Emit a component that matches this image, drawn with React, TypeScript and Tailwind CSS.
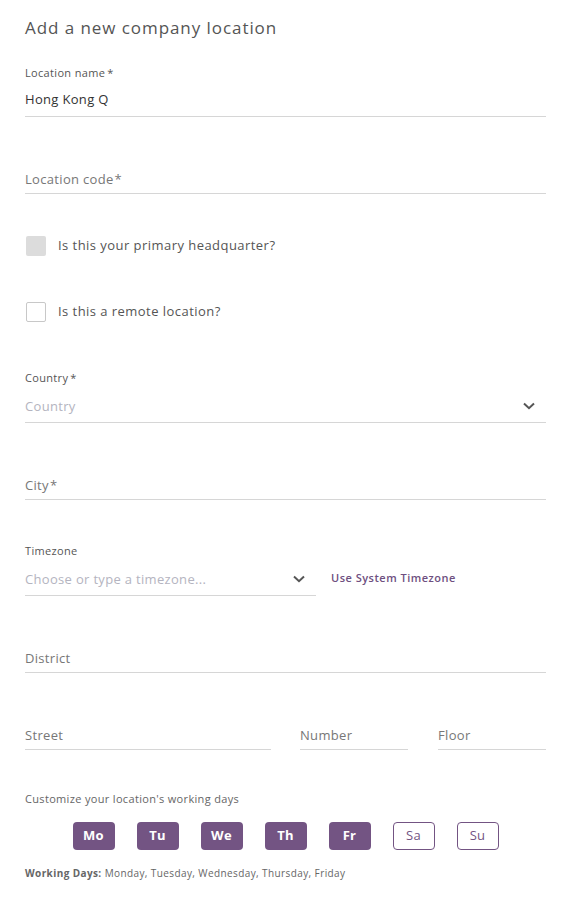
import React, { useState } from "react";

const FONT = { fontFamily: '"Open Sans", "Liberation Sans", sans-serif' };

function Chevron({ className = "" }: { className?: string }) {
  return (
    <svg width="12" height="8" viewBox="0 0 12 8" className={className} fill="none">
      <path d="M1 1.5 L6 6.2 L11 1.5" stroke="#555" strokeWidth="2" />
    </svg>
  );
}

function Checkbox({ label, disabled }: { label: string; disabled?: boolean }) {
  return (
    <div className="flex items-center">
      <div
        className={
          disabled
            ? "ml-[1px] h-[20px] w-[20px] rounded-[2px] bg-[#dcdcdc]"
            : "ml-[1px] h-[20px] w-[20px] rounded-[2px] border border-[#c8c8c8] bg-white"
        }
      />
      <span className="-mt-[3px] ml-[12px] text-[13px] leading-5 tracking-[0.035em] text-[#555]">{label}</span>
    </div>
  );
}

const DAYS = [
  { short: "Mo", long: "Monday" },
  { short: "Tu", long: "Tuesday" },
  { short: "We", long: "Wednesday" },
  { short: "Th", long: "Thursday" },
  { short: "Fr", long: "Friday" },
  { short: "Sa", long: "Saturday" },
  { short: "Su", long: "Sunday" },
];

export default function App() {
  const [active, setActive] = useState<string[]>(["Mo", "Tu", "We", "Th", "Fr"]);

  function toggle(d: string) {
    setActive((prev) => (prev.includes(d) ? prev.filter((x) => x !== d) : [...prev, d]));
  }

  const working = DAYS.filter((d) => active.includes(d.short))
    .map((d) => d.long)
    .join(", ");

  return (
    <div className="min-h-[897px] w-[571px] bg-white px-[25px] pt-4 tracking-[0.02em]" style={FONT}>
      <h1 className="text-[17px] leading-6 tracking-[0.055em] text-[#555]">Add a new company location</h1>

      {/* Location name */}
      <div className="mt-[25px] text-[11px] leading-4 tracking-[0.03em] text-[#555]">
        Location name<span className="ml-[2px]">*</span>
      </div>
      <div className="flex h-[36px] items-end border-b border-[#d6d6d6] pb-[7px] text-[13px] leading-5 text-[#333]">
        Hong Kong Q
      </div>

      {/* Location code */}
      <div className="mt-[41px] flex h-[36px] items-end border-b border-[#d6d6d6] pb-[4px] text-[13px] leading-5 text-[#777]">
        Location code<span className="ml-[1px]">*</span>
      </div>

      {/* checkboxes */}
      <div className="mt-[42px]">
        <Checkbox label="Is this your primary headquarter?" disabled />
      </div>
      <div className="mt-[46px]">
        <Checkbox label="Is this a remote location?" />
      </div>

      {/* Country */}
      <div className="mt-[48px] text-[11px] leading-4 tracking-[0.03em] text-[#555]">
        Country<span className="ml-[2px]">*</span>
      </div>
      <div className="flex h-[37px] items-end justify-between border-b border-[#d6d6d6] pb-[6px]">
        <span className="text-[13px] leading-5 text-[#b4b4c0]">Country</span>
        <Chevron className="mb-[6px] mr-[11px]" />
      </div>

      {/* City */}
      <div className="mt-[41px] flex h-[36px] items-end border-b border-[#d6d6d6] pb-[4px] text-[13px] leading-5 text-[#777]">
        City<span className="ml-[1px]">*</span>
      </div>

      {/* Timezone */}
      <div className="mt-[43px] text-[11px] leading-4 tracking-[0.03em] text-[#555]">Timezone</div>
      <div className="flex items-end">
        <div className="flex h-[37px] w-[291px] items-end justify-between border-b border-[#d6d6d6] pb-[6px]">
          <span className="text-[13px] leading-5 text-[#b4b4c0]">Choose or type a timezone...</span>
          <Chevron className="mb-[6px] mr-[11px]" />
        </div>
        <button className="mb-[10px] ml-[15px] text-[11px] font-semibold leading-4 tracking-[0.045em] text-[#6e4f80]">
          Use System Timezone
        </button>
      </div>

      {/* District */}
      <div className="mt-[41px] flex h-[36px] items-end border-b border-[#d6d6d6] pb-[4px] text-[13px] leading-5 text-[#777]">
        District
      </div>

      {/* Street / Number / Floor */}
      <div className="mt-[41px] flex">
        <div className="flex h-[36px] w-[246px] items-end border-b border-[#d6d6d6] pb-[4px] text-[13px] leading-5 text-[#777]">
          Street
        </div>
        <div className="ml-[29px] flex h-[36px] w-[108px] items-end border-b border-[#d6d6d6] pb-[4px] text-[13px] leading-5 text-[#777]">
          Number
        </div>
        <div className="ml-[30px] flex h-[36px] w-[108px] items-end border-b border-[#d6d6d6] pb-[4px] text-[13px] leading-5 text-[#777]">
          Floor
        </div>
      </div>

      {/* working days */}
      <div className="mt-[41px] text-[11px] leading-4 tracking-[0.03em] text-[#666]">
        Customize your location's working days
      </div>
      <div className="mt-[15px] flex justify-center gap-[22px]">
        {DAYS.map((d) => {
          const on = active.includes(d.short);
          return (
            <button
              key={d.short}
              onClick={() => toggle(d.short)}
              className={
                on
                  ? "h-[28px] w-[42px] rounded-[4px] bg-[#735483] text-[13px] font-bold text-white"
                  : "h-[28px] w-[42px] rounded-[4px] border border-[#735483] bg-white text-[13px] font-medium text-[#735483]"
              }
            >
              {d.short}
            </button>
          );
        })}
      </div>
      <div className="mt-[15px] text-[10px] leading-4 tracking-[0.04em] text-[#666]">
        <span className="font-bold">Working Days:</span> {working}
      </div>
    </div>
  );
}
